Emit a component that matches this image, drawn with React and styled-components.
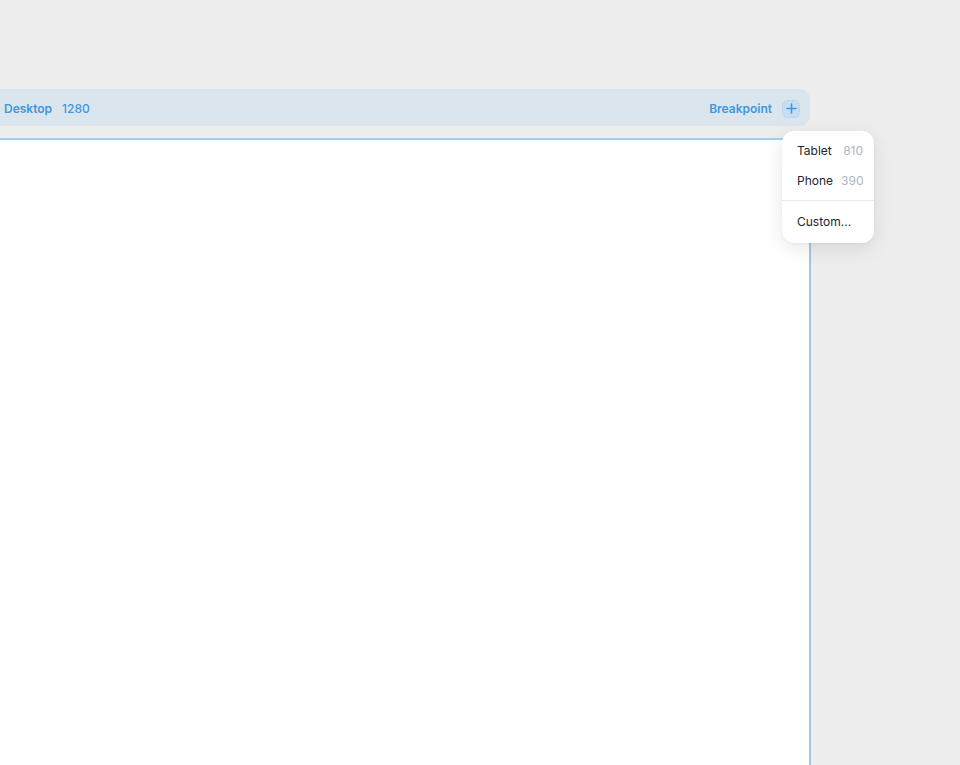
import React from "react"
import styled, { createGlobalStyle } from "styled-components"

const Global = createGlobalStyle`
  html, body { margin: 0; padding: 0; background: #ededed; }
  body { font-family: Inter, "Noto Sans", sans-serif; -webkit-font-smoothing: antialiased; }
  #root { height: 765px; overflow: hidden; }
`

const Page = styled.div`
  position: relative;
  height: 765px;
  padding-top: 89px;
  box-sizing: border-box;
`

const Frame = styled.div`
  margin-left: -20px;
  width: 830px;
  display: flex;
  flex-direction: column;
  gap: 12px;
  height: 100%;
`

const Bar = styled.div`
  height: 37px;
  box-sizing: border-box;
  background: #dae5ee;
  border-radius: 0 10px 10px 0;
  display: flex;
  align-items: center;
  padding: 2px 11px 0 24px;
  font-size: 12px;
  font-weight: 600;
  color: #3f97de;
`

const Label = styled.span`
  margin-right: ${p => p.gap || 0}px;
  font-weight: ${p => p.weight || 600};
`

const Spacer = styled.div`
  flex: 1;
`

const AddButton = styled.div`
  width: 16px;
  height: 16px;
  margin-left: 11px;
  border-radius: 5px;
  background: #c6def3;
  outline: 1px dotted #9bc6ea;
  display: flex;
  align-items: center;
  justify-content: center;
`

const Canvas = styled.div`
  flex: 1;
  width: 829px;
  background: #fff;
  border-top: 2px solid #9fcdf0;
  border-right: 2px solid #a7c6e2;
`

const Menu = styled.div`
  position: absolute;
  left: 782px;
  top: 131px;
  width: 92px;
  box-sizing: border-box;
  background: #fff;
  border-radius: 12px;
  box-shadow: 0 6px 20px rgba(0, 0, 0, 0.09), 0 1px 3px rgba(0, 0, 0, 0.05);
  padding: 4px 0 7px;
  font-size: 12px;
  color: #1e2430;
`

const Item = styled.div`
  height: 30px;
  display: flex;
  align-items: center;
  padding: 0 11px 0 15px;
  gap: 8px;
`

const Value = styled.span`
  color: #a9b7c7;
  margin-left: auto;
`

const Divider = styled.div`
  height: 1px;
  background: #ebebeb;
  margin: 5px 0;
`

const PlusIcon = () => (
  <svg width="11" height="11" viewBox="0 0 11 11">
    <path d="M5.5 1v9M1 5.5h9" stroke="#3f97de" strokeWidth="1.6" strokeLinecap="round" />
  </svg>
)

const App = () => (
  <>
    <Global />
    <Page>
      <Frame>
        <Bar>
          <Label gap={10}>Desktop</Label>
          <Label weight={500}>1280</Label>
          <Spacer />
          <Label>Breakpoint</Label>
          <AddButton><PlusIcon /></AddButton>
        </Bar>
        <Canvas />
      </Frame>
      <Menu>
        <Item>Tablet<Value>810</Value></Item>
        <Item>Phone<Value>390</Value></Item>
        <Divider />
        <Item>Custom...</Item>
      </Menu>
    </Page>
  </>
)

export default App
